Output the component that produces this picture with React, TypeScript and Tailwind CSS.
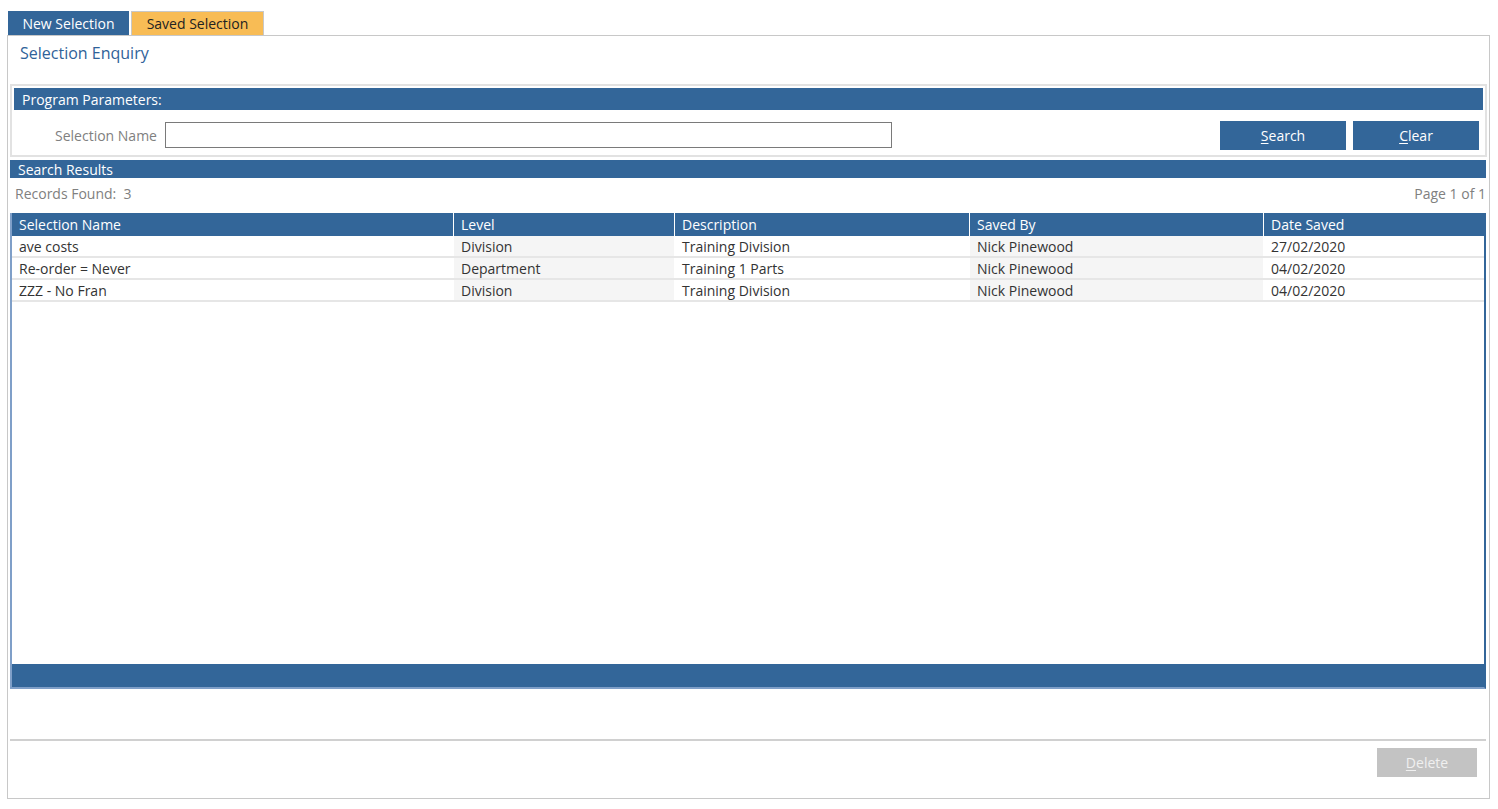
import React from 'react';

interface Row {
  name: string;
  level: string;
  description: string;
  savedBy: string;
  dateSaved: string;
}

const rows: Row[] = [
  { name: 'ave costs', level: 'Division', description: 'Training Division', savedBy: 'Nick Pinewood', dateSaved: '27/02/2020' },
  { name: 'Re-order = Never', level: 'Department', description: 'Training 1 Parts', savedBy: 'Nick Pinewood', dateSaved: '04/02/2020' },
  { name: 'ZZZ - No Fran', level: 'Division', description: 'Training Division', savedBy: 'Nick Pinewood', dateSaved: '04/02/2020' },
];

const font = { fontFamily: '"Open Sans", "Liberation Sans", sans-serif' };

export default function App() {
  return (
    <div className="w-[1498px] h-[809px] bg-white text-[14px] text-[#333]" style={font}>
      {/* tabs */}
      <div className="flex pl-2 pt-[11px] h-[35px]">
        <div className="w-[121px] h-[24px] bg-[#336699] text-white flex items-center justify-center leading-none pt-[1px]">
          New Selection
        </div>
        <div className="ml-[2px] w-[133px] h-[24px] bg-[#f8bc55] border border-b-0 border-[#c8c8c8] text-[#222] flex items-center justify-center leading-none pt-[1px]">
          Saved Selection
        </div>
      </div>

      {/* main panel */}
      <div className="ml-[7px] w-[1483px] h-[764px] border border-[#c8c8c8] flex flex-col">
        <div className="h-[48px] pl-[12px] pt-[5px] text-[16px] text-[#2f6299]">Selection Enquiry</div>

        {/* program parameters */}
        <div className="ml-[2px] w-[1477px] h-[73px] border-2 border-[#e2e2e2] p-[2px] flex flex-col">
          <div className="h-[23px] bg-[#336699] text-white pl-[8px] flex items-center">Program Parameters:</div>
          <div className="flex items-center h-[44px] pt-[7px]">
            <span className="ml-[41px] text-[#808080]">Selection Name</span>
            <input className="ml-[8px] w-[727px] h-[26px] border border-[#7a7a7a] bg-white outline-none" />
            <div className="flex-1" />
            <button className="w-[126px] h-[29px] bg-[#336699] text-white">
              <span className="underline underline-offset-2">S</span>earch
            </button>
            <button className="ml-[7px] mr-[4px] w-[126px] h-[29px] bg-[#336699] text-white">
              <span className="underline underline-offset-2">C</span>lear
            </button>
          </div>
        </div>

        {/* search results */}
        <div className="ml-[2px] mt-[3px] w-[1476px] h-[18px] bg-[#336699] text-white pl-[8px] flex items-center">
          Search Results
        </div>
        <div className="ml-[2px] w-[1476px] h-[35px] flex items-center justify-between text-[#808080] pb-[4px]">
          <span className="pl-[5px]">Records Found:&nbsp; 3</span>
          <span>Page 1 of 1</span>
        </div>

        {/* grid */}
        <div className="ml-[2px] w-[1476px] h-[476px] border-2 border-[#7f9fc8] border-t-0 border-r-[#336699] flex flex-col">
          <div className="flex h-[23px] bg-[#336699] text-white">
            <div className="w-[441px] pl-[7px] flex items-center">Selection Name</div>
            <div className="w-[221px] pl-[7px] border-l border-white flex items-center">Level</div>
            <div className="w-[295px] pl-[7px] border-l border-white flex items-center">Description</div>
            <div className="w-[294px] pl-[7px] border-l border-white flex items-center">Saved By</div>
            <div className="flex-1 pl-[7px] border-l border-white flex items-center">Date Saved</div>
          </div>
          {rows.map((r, i) => (
            <div key={i} className="flex h-[22px] border-b-2 border-[#e6e6e6] text-[#333]">
              <div className="w-[441px] pl-[7px] flex items-center">{r.name}</div>
              <div className="w-[221px] pl-[7px] border-l border-white bg-[#f5f5f5] flex items-center">{r.level}</div>
              <div className="w-[295px] pl-[7px] border-l border-white flex items-center">{r.description}</div>
              <div className="w-[294px] pl-[7px] border-l border-white bg-[#f5f5f5] flex items-center">{r.savedBy}</div>
              <div className="flex-1 pl-[7px] border-l border-white flex items-center">{r.dateSaved}</div>
            </div>
          ))}
          <div className="flex-1" />
          <div className="h-[23px] bg-[#336699]" />
        </div>

        <div className="flex-1" />
        <div className="ml-[2px] w-[1476px] border-t-2 border-[#d0d0d0]" />
        <div className="h-[57px] flex justify-end pt-[7px] pr-[12px]">
          <button className="w-[100px] h-[29px] bg-[#c3c3c3] text-[#f0f0f0]">
            <span className="underline underline-offset-2">D</span>elete
          </button>
        </div>
      </div>
    </div>
  );
}
